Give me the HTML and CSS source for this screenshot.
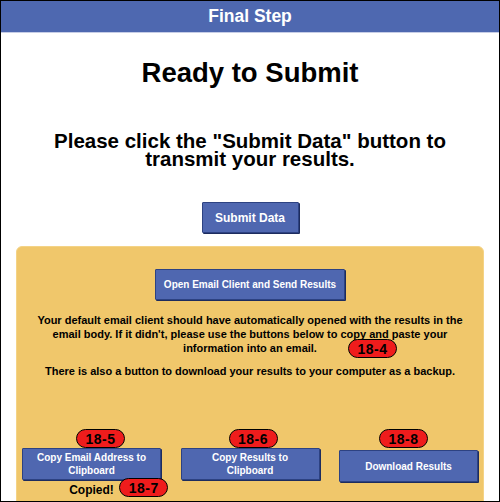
FILE: index.html
```html
<!DOCTYPE html>
<html>
<head>
<meta charset="utf-8">
<link rel="stylesheet" href="styles.css">
</head>
<body>
<div class="frame">
  <div class="header">Final Step</div>
  <h1 class="title">Ready to Submit</h1>
  <p class="lead">Please click the "Submit Data" button to<br>transmit your results.</p>
  <div class="center"><button class="btn btn-submit">Submit Data</button></div>
  <div class="panel">
    <div class="center"><button class="btn btn-email">Open Email Client and Send Results</button></div>
    <p class="info info-main">Your default email client should have automatically opened with the results in the<br>email body. If it didn't, please use the buttons below to copy and paste your<br>information into an email.<span class="badge badge-4">18-4</span></p>
    <p class="info info-backup">There is also a button to download your results to your computer as a backup.</p>
    <div class="actions">
      <div class="col">
        <span class="badge badge-5">18-5</span>
        <button class="btn btn-action">Copy Email Address to<br>Clipboard</button>
        <div class="copied"><span class="copied-text">Copied!</span><span class="badge badge-7">18-7</span></div>
      </div>
      <div class="col">
        <span class="badge badge-6">18-6</span>
        <button class="btn btn-action">Copy Results to<br>Clipboard</button>
      </div>
      <div class="col col-dl">
        <span class="badge badge-8">18-8</span>
        <button class="btn btn-action">Download Results</button>
      </div>
    </div>
  </div>
</div>
</body>
</html>
```

FILE: styles.css
```css
* { box-sizing: border-box; }
html, body { margin: 0; padding: 0; background: #fff; }
body { font-family: "Liberation Sans", Arial, sans-serif; }
.frame {
  width: 500px;
  height: 502px;
  border: 1px solid #000;
  overflow: hidden;
  background: #fff;
}
.header {
  height: 31px;
  background: #4e68b0;
  color: #fff;
  font-weight: bold;
  font-size: 17.5px;
  line-height: 30px;
  text-align: center;
  border-bottom: 1px solid #c6cde6;
  box-sizing: content-box;
}
.title {
  margin: 24px 0 0;
  font-size: 27.5px;
  line-height: 32px;
  text-align: center;
  font-weight: bold;
  color: #000;
}
.lead {
  margin: 43px 0 0;
  font-size: 20.5px;
  line-height: 18px;
  font-weight: bold;
  text-align: center;
  color: #000;
}
.center { display: flex; justify-content: center; }
.btn {
  font-family: "Liberation Sans", Arial, sans-serif;
  font-weight: bold;
  color: #fff;
  background: #4f67b0;
  border: 1px solid #2d4282;
  box-shadow: 1px 1px 0 #1d2c5e;
  border-radius: 1px;
  padding: 0;
  cursor: pointer;
  white-space: nowrap;
}
.btn-submit {
  margin-top: 34px;
  width: 97px;
  height: 31px;
  font-size: 12px;
}
.panel {
  margin: 13px 15px 0;
  height: 300px;
  background: #f0c76b;
  border: 1px solid #f4d386;
  border-radius: 6px;
  padding-top: 22px;
}
.btn-email {
  width: 190px;
  height: 31px;
  font-size: 10px;
}
.info {
  margin: 13px 0 0;
  padding: 0;
  font-size: 11px;
  line-height: 14px;
  font-weight: bold;
  text-align: center;
  color: #000;
  white-space: nowrap;
}
.info-main { position: relative; }
.info-backup { margin-top: 9px; }
.badge {
  position: absolute;
  display: flex;
  align-items: center;
  justify-content: center;
  width: 49px;
  height: 19px;
  background: #ef1c1c;
  border: 1px solid #000;
  border-radius: 10px;
  color: #000;
  font-weight: bold;
  font-size: 14px;
  line-height: 1;
  letter-spacing: 0.5px;
}
.badge-4 { left: 331px; top: 26px; }
.actions {
  margin-top: 70px;
  padding: 0 5px;
  display: grid;
  grid-template-columns: repeat(3, 139px);
  column-gap: 19.5px;
}
.col {
  position: relative;
  display: flex;
  flex-direction: column;
  align-items: center;
}
.col-dl { padding-top: 2px; }
.btn-action {
  width: 139px;
  height: 32px;
  font-size: 10px;
  line-height: 13px;
}
.badge-5 { left: 54px; top: -19px; }
.badge-6 { left: 48px; top: -19px; }
.badge-8 { left: 40px; top: -19px; }
.copied {
  position: relative;
  margin-top: 3px;
  font-size: 12px;
  font-weight: bold;
  color: #000;
  line-height: 14px;
}
.badge-7 { left: 50px; top: -5px; }
```
